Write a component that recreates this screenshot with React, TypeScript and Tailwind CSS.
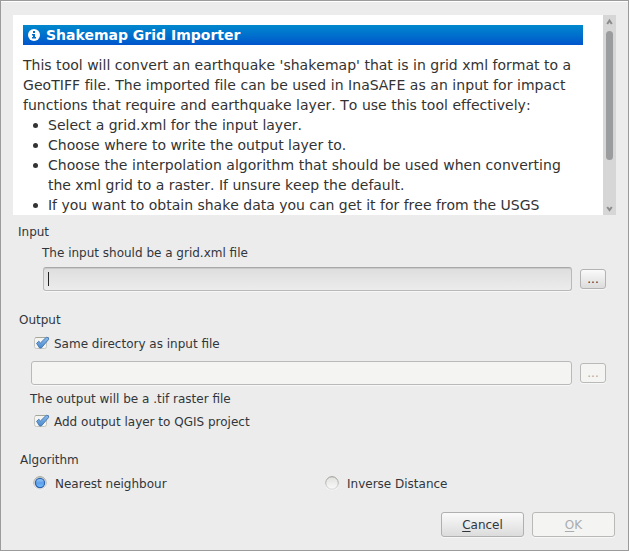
import React from "react";

function CheckBox({ label }: { label: string }) {
  return (
    <div className="flex h-4 items-center">
      <svg width="16" height="16" viewBox="0 0 16 16" className="mr-1 shrink-0">
        <defs>
          <linearGradient id="tick" x1="0" y1="0" x2="0" y2="1">
            <stop offset="0" stopColor="#8bbbe9" />
            <stop offset="1" stopColor="#4a8ad0" />
          </linearGradient>
        </defs>
        <rect x="0.5" y="1.5" width="12" height="11" rx="2" fill="#f4f4f2" stroke="#c6c6c0" />
        <path d="M1.500 1.500h10" stroke="#a4a79a" />
        <path d="M2.600 7.300L4.800 5.300 6.500 6.900 12.200 1.300 14.500 1.700V3.600L7.300 12H5.600z" fill="url(#tick)" stroke="#3f70ae" strokeWidth="0.9" strokeLinejoin="round" />
      </svg>
      <span>{label}</span>
    </div>
  );
}

function Radio({ label, checked }: { label: string; checked?: boolean }) {
  return (
    <div className="flex h-4 items-center">
      <svg width="16" height="16" viewBox="0 0 16 16" className="mr-[7px] shrink-0">
        <defs>
          <linearGradient id="ring" x1="0" y1="0" x2="0" y2="1">
            <stop offset="0" stopColor="#92968b" />
            <stop offset="1" stopColor="#d4d4d1" />
          </linearGradient>
          <linearGradient id="well" x1="0" y1="0" x2="0" y2="1">
            <stop offset="0" stopColor="#e0e1df" />
            <stop offset="1" stopColor="#fafafa" />
          </linearGradient>
          <linearGradient id="dot" x1="0" y1="0" x2="0" y2="1">
            <stop offset="0" stopColor="#9cccfa" />
            <stop offset="0.5" stopColor="#5b9fea" />
            <stop offset="1" stopColor="#7cc0ff" />
          </linearGradient>
        </defs>
        <circle cx="8" cy="7.500" r="7" fill="#f9f9f9" />
        <circle cx="8" cy="7" r="6.300" fill="url(#well)" stroke="url(#ring)" />
        {checked && <circle cx="8" cy="7" r="4.600" fill="url(#dot)" stroke="#2a62ae" strokeWidth="1.200" />}
      </svg>
      <span>{label}</span>
    </div>
  );
}

function Bullet({ children }: { children: React.ReactNode }) {
  return (
    <li className="flex">
      <span className="mt-[8px] mr-[10px] ml-[10px] h-[5px] w-[5px] shrink-0 rounded-full bg-[#333]" />
      <span>{children}</span>
    </li>
  );
}

export default function App() {
  return (
    <div className="flex h-[551px] w-[629px] flex-col overflow-hidden border border-[#9b9b9b] bg-[#ececec] font-['DejaVu_Sans',sans-serif] text-[12px] leading-4 text-[#31363b]">
      <div className="h-px shrink-0 bg-white" />
      <div className="mt-[13px] ml-3 flex h-[200px] w-[603px] shrink-0">
        <div className="w-[590px] overflow-hidden bg-white px-[10px] pt-[10px] text-[14px] leading-5 whitespace-nowrap text-[#333]">
          <div className="flex h-5 w-[560px] items-center bg-linear-to-b from-[#0088cc] to-[#0055cc] font-bold text-white">
            <svg width="12" height="12" viewBox="0 0 12 12" className="mr-[6px] ml-[5px]">
              <circle cx="6" cy="6" r="6" fill="#fff" />
              <path d="M5 2h2v2H5zM4 5h3v3h1v1.500H4V8h1V6.500H4z" fill="#0070cc" />
            </svg>
            Shakemap Grid Importer
          </div>
          <div className="[font-kerning:none]">
            <p className="mt-[10px]">
              <span className="tracking-[0.013px]">This tool will convert an earthquake 'shakemap' that is in grid xml format to a</span>
              <br />
              <span className="tracking-[0.048px]">GeoTIFF file. The imported file can be used in InaSAFE as an input for impact</span>
              <br />
              <span className="tracking-[0.022px]">functions that require and earthquake layer. To use this tool effectively:</span>
            </p>
            <ul>
              <Bullet>Select a grid.xml for the input layer.</Bullet>
              <Bullet>Choose where to write the output layer to.</Bullet>
              <Bullet>
                <span className="tracking-[0.036px]">Choose the interpolation algorithm that should be used when converting</span>
                <br />
                <span className="tracking-[-0.02px]">the xml grid to a raster. If unsure keep the default.</span>
              </Bullet>
              <Bullet>
                <span className="tracking-[-0.015px]">If you want to obtain shake data you can get it for free from the USGS</span>
              </Bullet>
            </ul>
          </div>
        </div>
        <div className="flex w-[13px] flex-col items-center bg-[#d6d6d6]">
          <svg width="7" height="16" viewBox="0 0 7 16" fill="none" stroke="#8b8b8b" strokeWidth="2">
            <path d="M1.200 9L3.500 5.500 5.800 9" />
          </svg>
          <div className="h-[129px] w-[7px] rounded-full bg-[#9b9c9d]" />
          <svg width="7" height="14" viewBox="0 0 7 14" fill="none" stroke="#8b8b8b" strokeWidth="2" className="mt-auto">
            <path d="M1.200 6L3.500 9 5.800 6" />
          </svg>
        </div>
      </div>

      <div className="mt-[9px] ml-[17px]">Input</div>
      <div className="mt-[5px] ml-[41px]">The input should be a grid.xml file</div>
      <div className="mt-[6px] ml-[42px] flex h-6 items-center gap-2">
        <div className="flex h-6 w-[529px] items-center rounded-[3px] border border-[#b9b9b9] border-t-[#a9a9a9] bg-linear-to-b from-[#dedede] to-[#ececec] pl-1 shadow-[0_1px_0_#f7f7f7,inset_0_1px_0_#cacaca]">
          <div className="h-[14px] w-px bg-[#222]" />
        </div>
        <button className="h-5 w-[26px] rounded-[3px] border border-[#b3b3b3] bg-linear-to-b from-[#fafafa] to-[#dcdcdc] text-[12px] leading-[18px] shadow-[0_1px_0_#f7f7f7]">...</button>
      </div>

      <div className="mt-[21px] ml-[18px]">Output</div>
      <div className="mt-2 ml-[33px]">
        <CheckBox label="Same directory as input file" />
      </div>
      <div className="mt-[9px] ml-[30px] flex h-6 items-center gap-2">
        <div className="h-6 w-[541px] rounded-[3px] border border-[#b9b9b9] bg-[#f4f4f2] shadow-[0_1px_0_#f7f7f7]" />
        <button className="h-5 w-[26px] rounded-[3px] border border-[#b9b9b7] bg-[#f4f4f2] text-[12px] leading-[18px] text-[#aaa] shadow-[0_1px_0_#f7f7f7]">...</button>
      </div>
      <div className="mt-[6px] ml-[29px]">The output will be a .tif raster file</div>
      <div className="mt-[7px] ml-[33px]">
        <CheckBox label="Add output layer to QGIS project" />
      </div>

      <div className="mt-[22px] ml-[19px]">Algorithm</div>
      <div className="mt-2 ml-[31px] flex">
        <div className="w-[292px]">
          <Radio label="Nearest neighbour" checked />
        </div>
        <Radio label="Inverse Distance" />
      </div>
      <div className="mt-[20px] mr-[13px] flex justify-end gap-2">
        <button className="h-[25px] w-[83px] rounded-[3px] border border-[#b0b0b0] bg-linear-to-b from-[#fafafa] to-[#dcdcdc] leading-[22px] shadow-[0_1px_0_#f7f7f7]">
          <span className="underline underline-offset-2">C</span>ancel
        </button>
        <button className="h-[25px] w-[83px] rounded-[3px] border border-[#b9b9b7] bg-[#f4f4f2] leading-[22px] text-[#aaadb0] shadow-[0_1px_0_#f7f7f7]">
          <span className="underline underline-offset-2">O</span>K
        </button>
      </div>
    </div>
  );
}
